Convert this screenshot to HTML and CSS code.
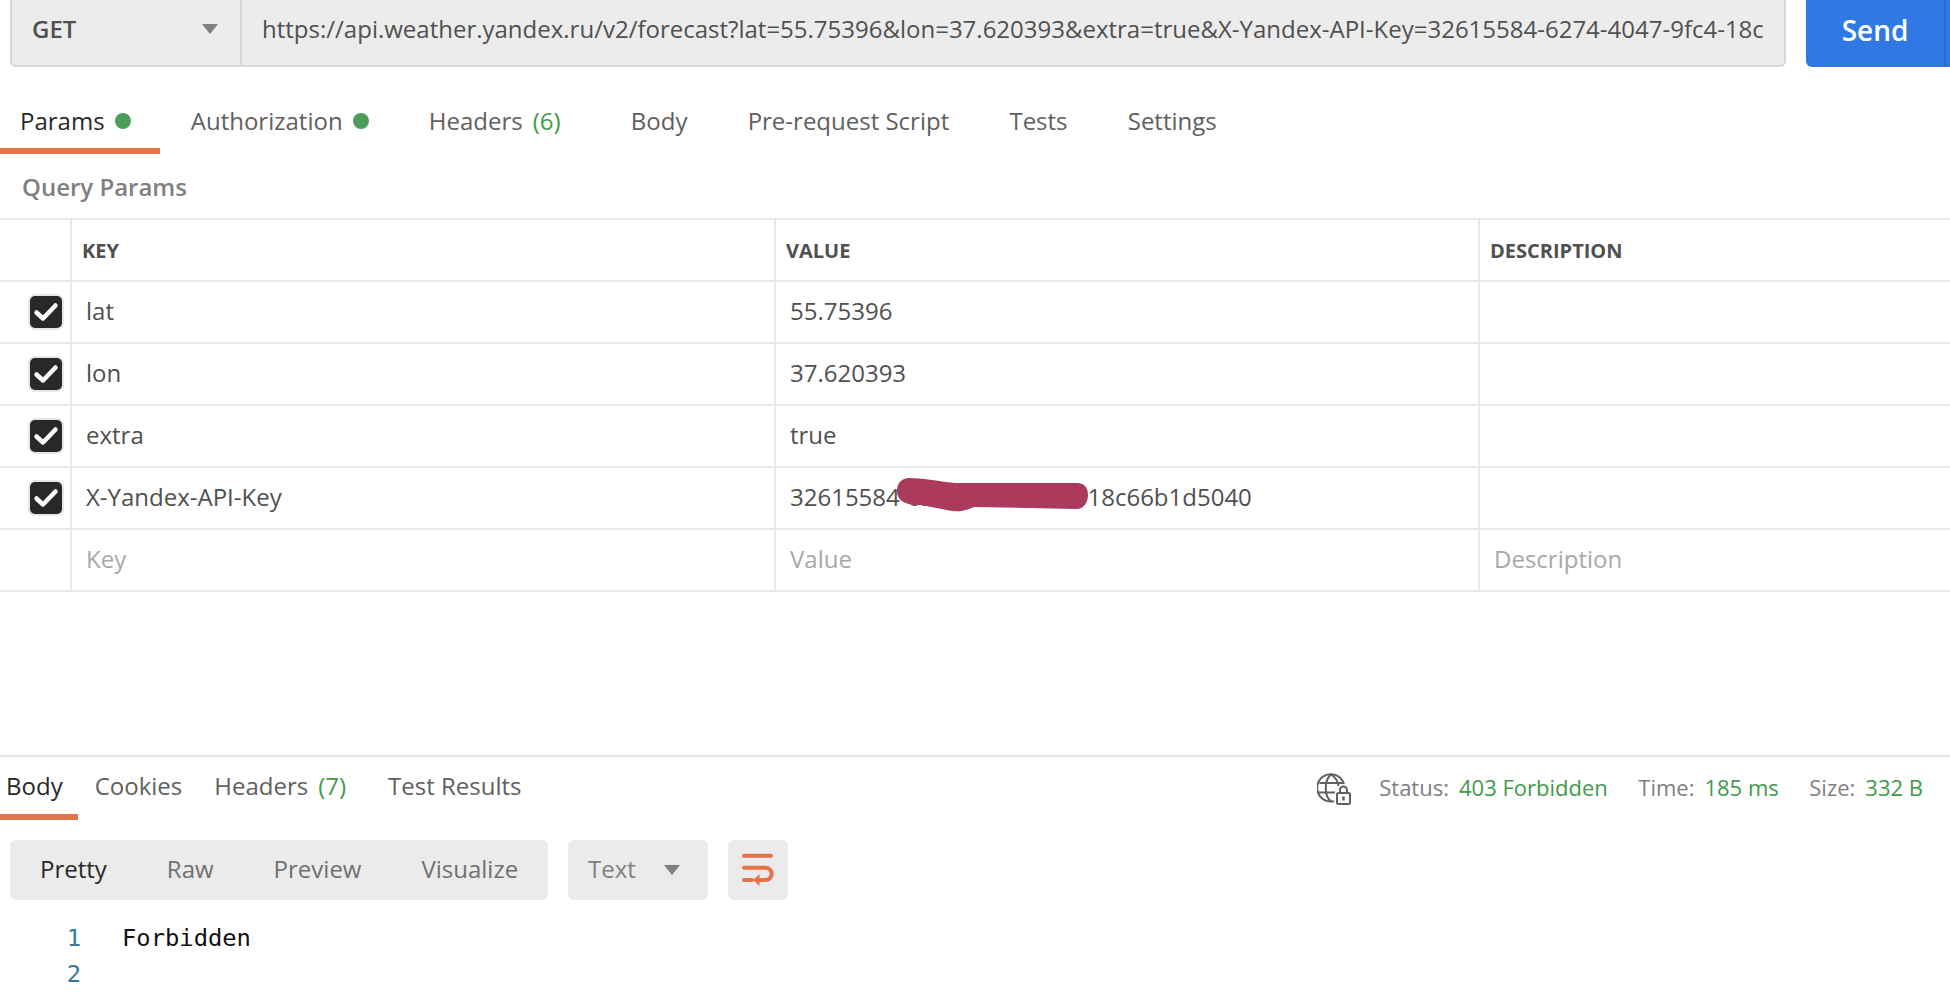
FILE: index.html
```html
<!DOCTYPE html>
<html lang="en">
<head>
<meta charset="utf-8">
<title>Postman request</title>
<link rel="stylesheet" href="styles.css">
</head>
<body>
<main class="app">
  <section class="request-bar">
    <div class="url-group">
      <div class="method"><span>GET</span><i class="caret"></i></div>
      <div class="url"><span>https://api.weather.yandex.ru/v2/forecast?lat=55.75396&amp;lon=37.620393&amp;extra=true&amp;X-Yandex-API-Key=32615584-6274-4047-9fc4-18c</span></div>
    </div>
    <div class="send"><span class="send-main">Send</span><span class="send-more"></span></div>
  </section>

  <nav class="tabs req-tabs">
    <div class="tab active first">Params<i class="dot"></i></div>
    <div class="tab">Authorization<i class="dot"></i></div>
    <div class="tab wide">Headers<em>(6)</em></div>
    <div class="tab">Body</div>
    <div class="tab">Pre-request Script</div>
    <div class="tab">Tests</div>
    <div class="tab">Settings</div>
  </nav>

  <div class="section-title">Query Params</div>

  <div class="params">
    <div class="cell check head"></div><div class="cell head key">KEY</div><div class="cell head">VALUE</div><div class="cell head">DESCRIPTION</div>

    <div class="cell check"><span class="box"><svg viewBox="0 0 32 32"><path d="M6.500 16.500L13 22.500L25.500 9.500" /></svg></span></div><div class="cell key">lat</div><div class="cell">55.75396</div><div class="cell"></div>
    <div class="cell check"><span class="box"><svg viewBox="0 0 32 32"><path d="M6.500 16.500L13 22.500L25.500 9.500" /></svg></span></div><div class="cell key">lon</div><div class="cell">37.620393</div><div class="cell"></div>
    <div class="cell check"><span class="box"><svg viewBox="0 0 32 32"><path d="M6.500 16.500L13 22.500L25.500 9.500" /></svg></span></div><div class="cell key">extra</div><div class="cell">true</div><div class="cell"></div>
    <div class="cell check"><span class="box"><svg viewBox="0 0 32 32"><path d="M6.500 16.500L13 22.500L25.500 9.500" /></svg></span></div><div class="cell key">X-Yandex-API-Key</div>
    <div class="cell secret">32615584-6274-4047-9fc4-18c66b1d5040
      <svg class="scribble" viewBox="0 0 192 34"><path d="M12 0C25 0 40 3 58 5L180 5C188 5 191 10 191 17C191 25 186 31 180 31L77 29C68 33 62 34 55 33L24 27C8 28 0 22 0 13C0 5 5 0 12 0Z" /></svg>
    </div><div class="cell"></div>
    <div class="cell check"></div><div class="cell key ph">Key</div><div class="cell ph">Value</div><div class="cell ph">Description</div>
  </div>

  <section class="response">
    <div class="res-head">
      <nav class="tabs res-tabs">
        <div class="tab active first">Body</div>
        <div class="tab">Cookies</div>
        <div class="tab wide">Headers<em>(7)</em></div>
        <div class="tab">Test Results</div>
      </nav>
      <div class="stats">
        <svg class="globe" viewBox="0 0 34 36">
          <g class="globe-lines">
            <path d="M17 32.200A13.700 13.700 0 1 1 27 15" />
            <path d="M14 5.500C7 11 7 27 14 32.500" />
            <path d="M14 5.500C18 8 21 13 21.500 17" />
            <path d="M2.500 14H26" />
            <path d="M1 23.500H18" />
          </g>
          <rect class="lock" x="20" y="24" width="13" height="11" rx="1.500" />
          <path class="globe-lines" d="M23 24v-3a3.500 3.500 0 0 1 7 0v3" />
          <rect class="lock-hole" x="25.300" y="27.500" width="2.400" height="4" />
        </svg>
        <span class="stat">Status:<b>403 Forbidden</b></span>
        <span class="stat">Time:<b>185 ms</b></span>
        <span class="stat">Size:<b>332 B</b></span>
      </div>
    </div>

    <div class="toolbar">
      <div class="views">
        <span class="view on">Pretty</span>
        <span class="view">Raw</span>
        <span class="view">Preview</span>
        <span class="view">Visualize</span>
      </div>
      <div class="format"><span>Text</span><i class="caret"></i></div>
      <div class="wrap">
        <svg viewBox="0 0 60 60"><path d="M16 15.700h27M16 27.700h21.500a6.200 6.200 0 0 1 0 12.400h-7M16 40.100h8" /><path class="arrow-head" d="M31.500 34.200v11.800l-6.500-5.900z" /></svg>
      </div>
    </div>

    <div class="code">
      <div class="line"><span class="num">1</span><span class="src">Forbidden</span></div>
      <div class="line"><span class="num">2</span><span class="src"></span></div>
    </div>
  </section>
</main>
</body>
</html>
```

FILE: styles.css
```css
* { box-sizing: border-box; }
html, body { margin: 0; padding: 0; background: #fff; }
body { font-family: "Open Sans", "Liberation Sans", sans-serif; font-size: 24px; color: #505050; }
.app { width: 1950px; height: 1002px; overflow: hidden; display: flex; flex-direction: column; }
i, em, b { font-style: normal; }

.request-bar { display: flex; height: 67px; padding-left: 10px; }
.url-group { width: 1776px; display: flex; background: #ececec; border: 2px solid #d8d8d8; border-top: 0; border-radius: 0 0 6px 6px; }
.method { width: 230px; flex: none; display: flex; align-items: center; justify-content: space-between; padding: 0 22px 8px 20px; border-right: 2px solid #d8d8d8; font-size: 24px; font-weight: 600; color: #505050; }
.caret { display: block; width: 0; height: 0; border-left: 8px solid transparent; border-right: 8px solid transparent; border-top: 10px solid #808080; }
.url { flex: 1; min-width: 0; padding: 0 20px 9px; display: flex; align-items: center; white-space: nowrap; font-size: 24px; color: #505050; }
.send { margin-left: 20px; flex: 1; display: flex; background: #3079e5; color: #fff; border-bottom-left-radius: 6px; font-size: 28px; font-weight: 600; }
.send-main { width: 138px; display: flex; align-items: center; justify-content: center; padding-bottom: 8px; }
.send-more { flex: 1; border-left: 2px solid #2a6ccf; }

.tabs { display: flex; }
.tab { display: flex; align-items: center; padding: 0 29.200px 0 31px; white-space: nowrap; color: #606060; border-bottom: 6px solid transparent; }
.tab em { color: #3f9a4b; margin-left: 10px; }
.tab.active { color: #282828; border-bottom-color: #e5734a; }
.tab.first { padding-left: 20px; }
.tab.wide { margin-right: 10px; }
.dot { width: 16px; height: 16px; border-radius: 50%; background: #4c9c5a; margin-left: 10px; }
.req-tabs { height: 87px; padding-top: 26px; }

.section-title { height: 64px; padding: 19px 0 0 22px; font-size: 24px; line-height: 28px; font-weight: 600; color: #808080; }

.params { display: grid; grid-template-columns: 72px 704px 704px 470px; border-top: 2px solid #e8e8e8; }
.cell { height: 62px; display: flex; align-items: center; padding: 0 0 3px 14px; border-bottom: 2px solid #e8e8e8; border-right: 2px solid #e8e8e8; color: #505050; white-space: nowrap; }
.cell:nth-child(4n) { border-right: 0; }
.cell.head { padding: 0 0 0 10px; font-size: 20px; font-weight: 700; color: #505050; }
.cell.check { padding: 0 0 0 28px; }
.cell.ph { color: #a8a8a8; }
.box { display: block; width: 36px; height: 36px; background: #282828; border: 2px solid #e6e6e6; border-radius: 7px; }
.box svg { display: block; width: 32px; height: 32px; }
.box path { fill: none; stroke: #fff; stroke-width: 4.500; stroke-linecap: round; stroke-linejoin: round; }
.secret { position: relative; }
.scribble { position: absolute; left: 121px; top: 10px; width: 192px; height: 34px; }
.scribble path { fill: #ab3a5d; }

.response { margin-top: 163px; border-top: 2px solid #e4e4e4; flex: 1; display: flex; flex-direction: column; }
.res-head { display: flex; justify-content: space-between; height: 63px; }
.res-tabs .tab { padding: 0 15px 0 17px; }
.res-tabs .tab.first { padding: 0 15px 0 6px; }
.res-tabs .tab.wide { margin-right: 10px; }
.stats { display: flex; align-items: center; padding-right: 27px; padding-bottom: 4px; font-size: 22px; color: #808080; }
.globe { width: 34px; height: 36px; margin-right: 28px; }
.globe-lines { fill: none; stroke: #606060; stroke-width: 2; }
.lock { fill: #fff; stroke: #606060; stroke-width: 2; }
.lock-hole { fill: #606060; }
.stat { display: flex; margin-right: 30.500px; }
.stat:last-child { margin-right: 0; }
.stat b { font-weight: 400; color: #3f9a4b; margin-left: 10px; }

.toolbar { display: flex; margin-top: 20px; padding-left: 10px; height: 60px; }
.views { width: 538px; display: flex; align-items: center; background: #ebebeb; border-radius: 6px; padding: 0 0 3px 30px; }
.view { color: #707070; margin-right: 60px; }
.view.on { color: #282828; }
.format { width: 140px; margin-left: 20px; display: flex; align-items: center; justify-content: space-between; padding: 0 28px 3px 20px; background: #ebebeb; border-radius: 6px; color: #808080; }
.format .caret { margin-top: 3px; }
.wrap { width: 60px; margin-left: 20px; background: #ebebeb; border-radius: 6px; }
.wrap svg { display: block; width: 60px; height: 60px; }
.wrap path { fill: none; stroke: #e5734a; stroke-width: 4; stroke-linecap: round; }
.wrap .arrow-head { fill: #e5734a; stroke: none; }

.code { margin-top: 20px; font-family: "DejaVu Sans Mono", "Liberation Mono", monospace; font-size: 23.800px; }
.line { display: flex; height: 36px; line-height: 36px; }
.num { width: 81px; text-align: right; color: #3b7a96; }
.src { margin-left: 41px; color: #111; }
```
